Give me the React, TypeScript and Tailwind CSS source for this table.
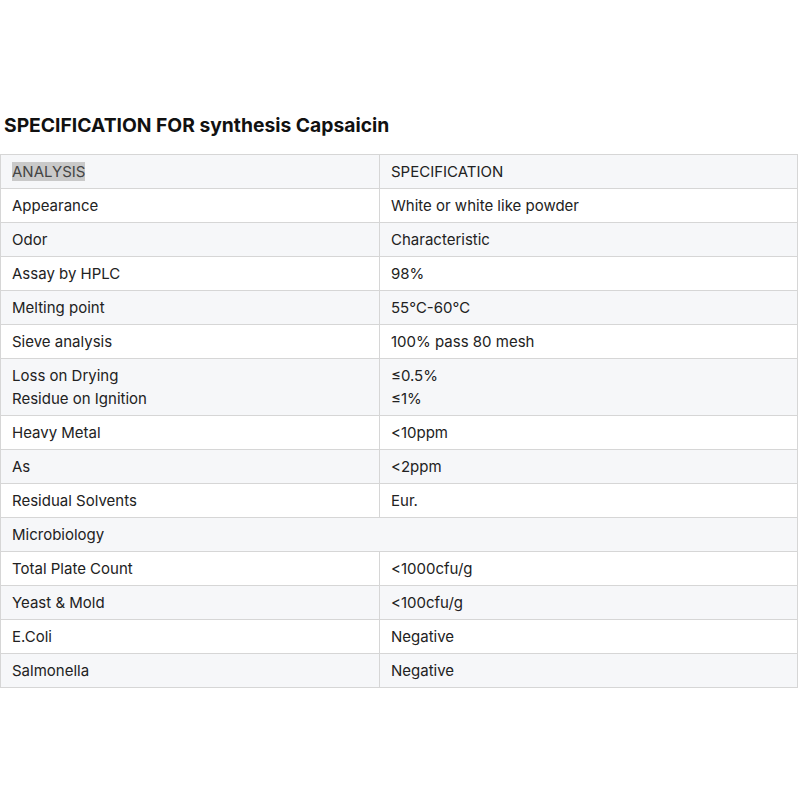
import React from "react";

const rows: [string[], string[]][] = [
  [["Appearance"], ["White or white like powder"]],
  [["Odor"], ["Characteristic"]],
  [["Assay by HPLC"], ["98%"]],
  [["Melting point"], ["55℃-60℃"]],
  [["Sieve analysis"], ["100% pass 80 mesh"]],
  [["Loss on Drying", "Residue on Ignition"], ["≤0.5%", "≤1%"]],
  [["Heavy Metal"], ["<10ppm"]],
  [["As"], ["<2ppm"]],
  [["Residual Solvents"], ["Eur."]],
];

const rows2: [string, string][] = [
  ["Total Plate Count", "<1000cfu/g"],
  ["Yeast & Mold", "<100cfu/g"],
  ["E.Coli", "Negative"],
  ["Salmonella", "Negative"],
];

export default function App() {
  const cell = "border border-[#d6d6d6] pl-[11px] pr-2 py-[5px] align-top";
  let idx = 0;
  const bg = () => (idx++ % 2 === 0 ? "bg-[#f6f7f9]" : "bg-white");
  return (
    <div className="w-[800px] h-[800px] bg-white text-[#222] font-['Inter',sans-serif]">
      <div className="pt-[112px]">
        <h2 className="pl-[4px] text-[19.3px] font-bold leading-[26px] text-[#111]">
          SPECIFICATION FOR synthesis Capsaicin
        </h2>
        <table className="mt-[16px] w-[798px] border-collapse text-[15px] leading-[23px] table-fixed">
          <colgroup>
            <col className="w-[379px]" />
            <col />
          </colgroup>
          <tbody>
            <tr className={bg()}>
              <td className={cell}>
                <span className="bg-[#c9c9c9] text-[#444]">ANALYSIS</span>
              </td>
              <td className={cell}>SPECIFICATION</td>
            </tr>
            {rows.map(([a, b], i) => (
              <tr key={i} className={bg()}>
                <td className={cell}>
                  {a.map((t, j) => (
                    <div key={j}>{t}</div>
                  ))}
                </td>
                <td className={cell}>
                  {b.map((t, j) => (
                    <div key={j}>{t}</div>
                  ))}
                </td>
              </tr>
            ))}
            <tr className={bg()}>
              <td className={cell} colSpan={2}>
                Microbiology
              </td>
            </tr>
            {rows2.map(([a, b], i) => (
              <tr key={"m" + i} className={bg()}>
                <td className={cell}>{a}</td>
                <td className={cell}>{b}</td>
              </tr>
            ))}
          </tbody>
        </table>
      </div>
    </div>
  );
}
